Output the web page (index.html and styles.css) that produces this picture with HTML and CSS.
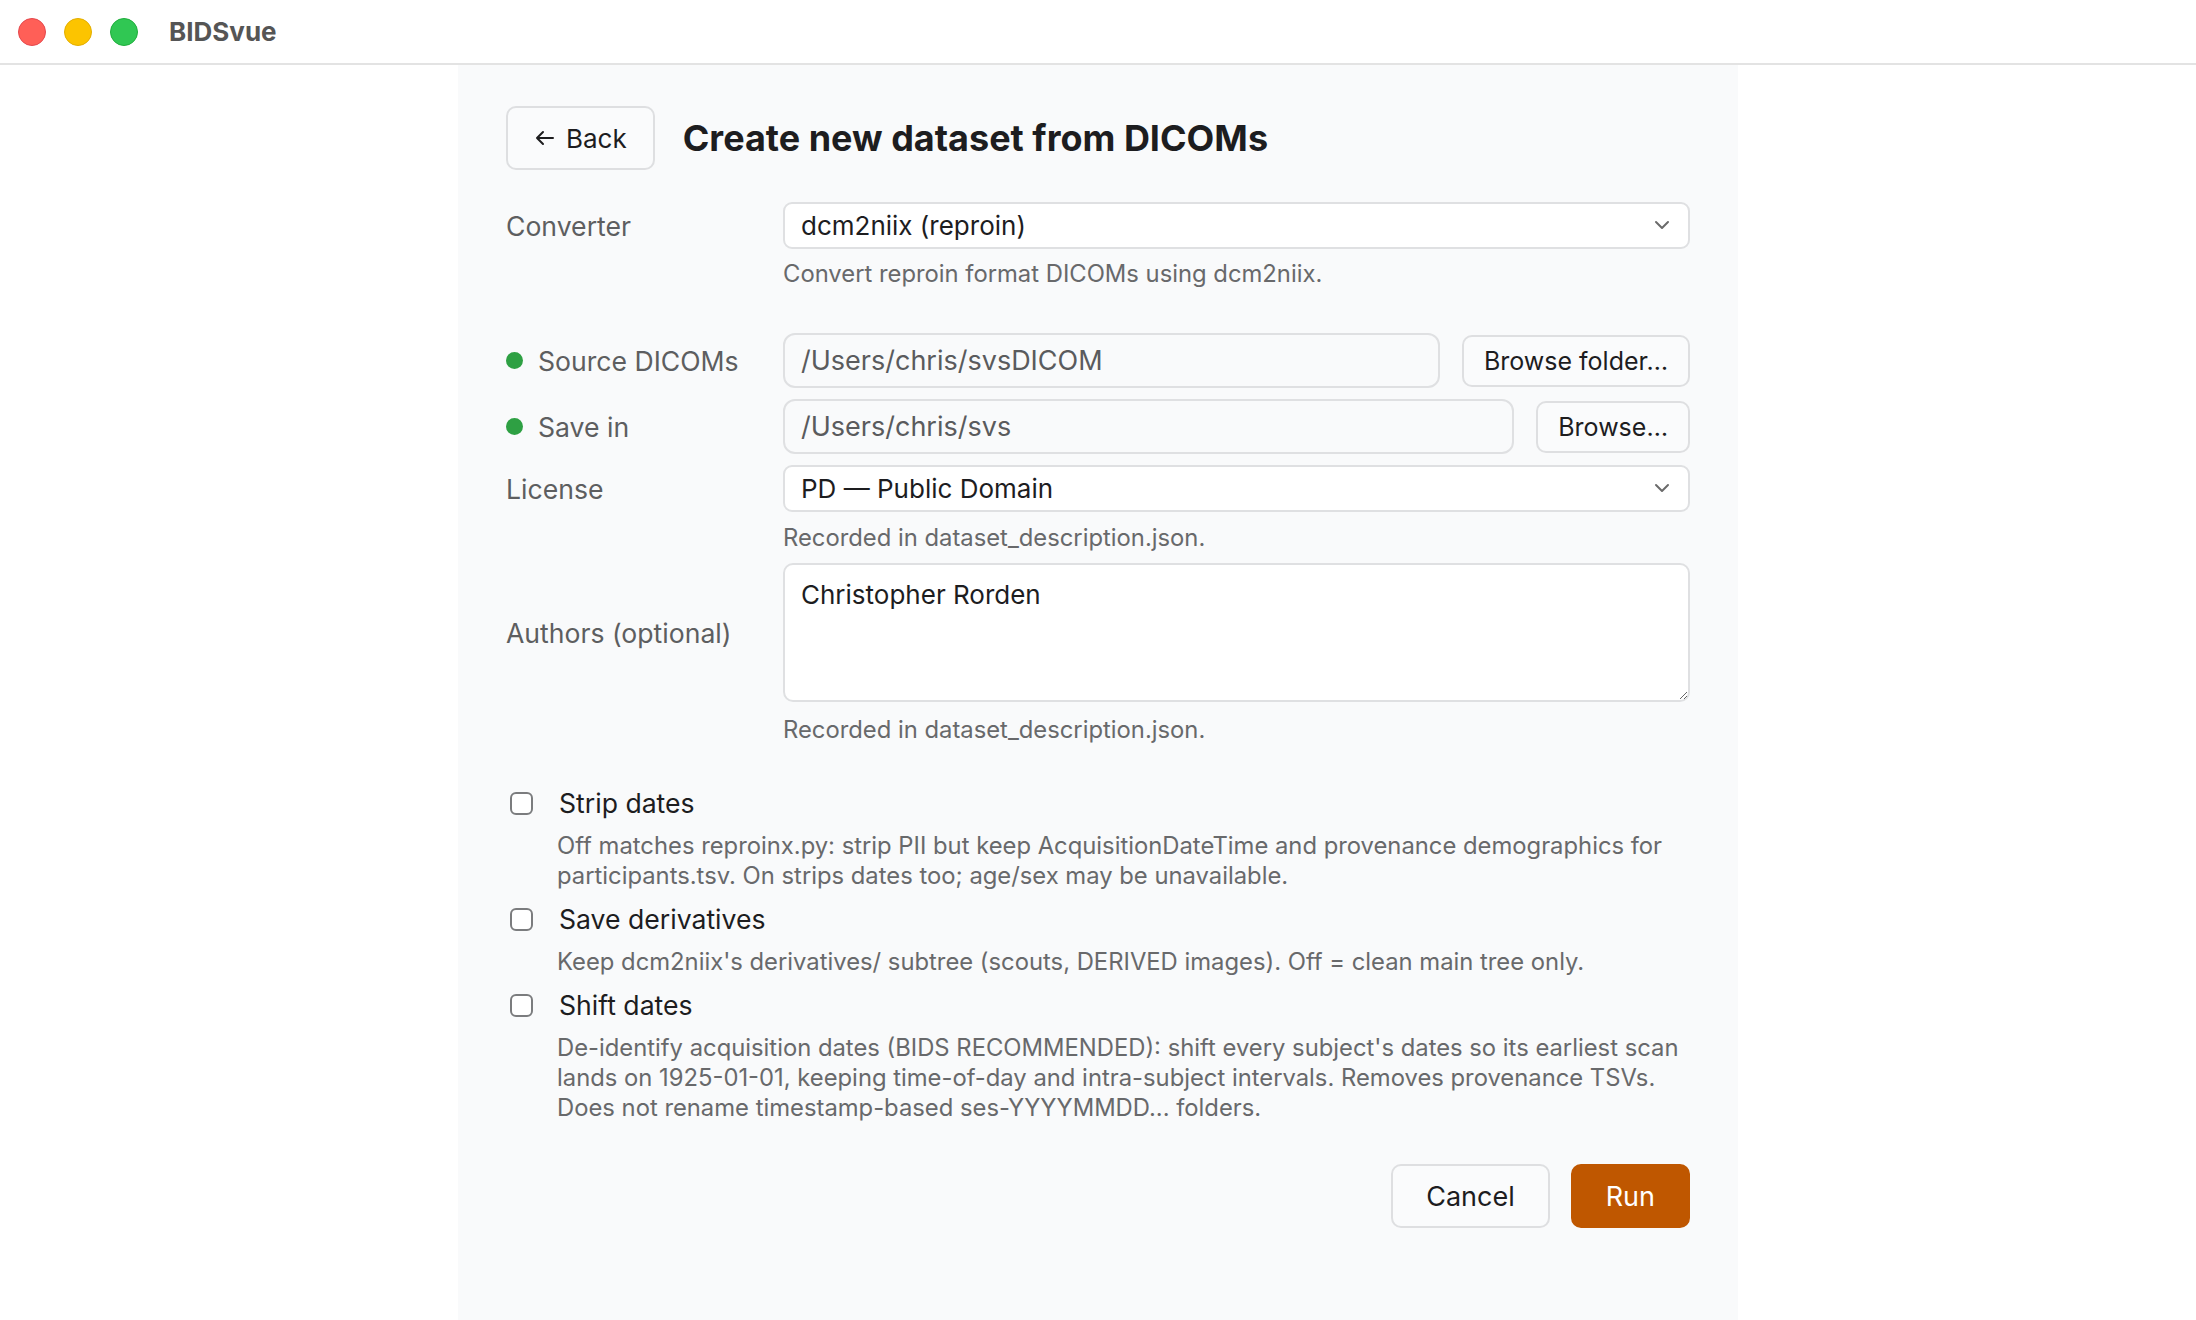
FILE: index.html
```html
<!DOCTYPE html>
<html lang="en">
<head>
    <meta charset="UTF-8">
    <meta name="viewport" content="width=device-width, initial-scale=1.0">
    <title>BIDSvue</title>
    <link rel="stylesheet" href="styles.css">
</head>
<body>
    <div class="titlebar">
        <div class="lights">
            <span class="light red"></span>
            <span class="light yellow"></span>
            <span class="light green"></span>
        </div>
        <div class="app-name">BIDSvue</div>
    </div>

    <main class="page">
        <section class="panel">
            <header class="panel-head">
                <button class="btn back-btn">
                    <svg width="20" height="16" viewBox="0 0 20 16" fill="none" stroke="currentColor" stroke-width="2" stroke-linecap="round" stroke-linejoin="round">
                        <path d="M18 8H2M8 2L2 8l6 6"/>
                    </svg>
                    Back
                </button>
                <h1>Create new dataset from DICOMs</h1>
            </header>

            <div class="form">
                <div class="field field-spaced">
                    <label class="field-label">Converter</label>
                    <div class="select-wrap">
                        <select class="select">
                            <option>dcm2niix (reproin)</option>
                        </select>
                        <svg class="chevron" width="16" height="10" viewBox="0 0 16 10" fill="none" stroke="currentColor" stroke-width="2" stroke-linecap="round" stroke-linejoin="round">
                            <path d="M2 2l6 6 6-6"/>
                        </svg>
                    </div>
                    <p class="hint">Convert reproin format DICOMs using dcm2niix.</p>
                </div>

                <div class="field">
                    <label class="field-label"><span class="dot"></span>Source DICOMs</label>
                    <div class="path-row">
                        <input class="path-input" type="text" value="/Users/chris/svsDICOM" readonly>
                        <button class="btn browse-btn">Browse folder…</button>
                    </div>
                </div>

                <div class="field">
                    <label class="field-label"><span class="dot"></span>Save in</label>
                    <div class="path-row">
                        <input class="path-input" type="text" value="/Users/chris/svs" readonly>
                        <button class="btn browse-btn">Browse…</button>
                    </div>
                </div>

                <div class="field">
                    <label class="field-label">License</label>
                    <div class="select-wrap">
                        <select class="select">
                            <option>PD — Public Domain</option>
                        </select>
                        <svg class="chevron" width="16" height="10" viewBox="0 0 16 10" fill="none" stroke="currentColor" stroke-width="2" stroke-linecap="round" stroke-linejoin="round">
                            <path d="M2 2l6 6 6-6"/>
                        </svg>
                    </div>
                    <p class="hint hint-mid">Recorded in dataset_description.json.</p>
                </div>

                <div class="field">
                    <label class="field-label">Authors (optional)</label>
                    <textarea class="authors">Christopher Rorden</textarea>
                    <p class="hint hint-low">Recorded in dataset_description.json.</p>
                </div>
            </div>

            <div class="options">
                <div class="option">
                    <input type="checkbox" class="check">
                    <span class="option-label">Strip dates</span>
                    <p class="option-desc">Off matches reproinx.py: strip PII but keep AcquisitionDateTime and provenance demographics for participants.tsv. On strips dates too; age/sex may be unavailable.</p>
                </div>
                <div class="option">
                    <input type="checkbox" class="check">
                    <span class="option-label">Save derivatives</span>
                    <p class="option-desc">Keep dcm2niix's derivatives/ subtree (scouts, DERIVED images). Off = clean main tree only.</p>
                </div>
                <div class="option">
                    <input type="checkbox" class="check">
                    <span class="option-label">Shift dates</span>
                    <p class="option-desc">De-identify acquisition dates (BIDS RECOMMENDED): shift every subject's dates so its earliest scan lands on 1925-01-01, keeping time-of-day and intra-subject intervals. Removes provenance TSVs. Does not rename timestamp-based ses-YYYYMMDD... folders.</p>
                </div>
            </div>

            <div class="actions">
                <button class="btn cancel-btn">Cancel</button>
                <button class="btn run-btn">Run</button>
            </div>
        </section>
    </main>
</body>
</html>
```

FILE: styles.css
```css
body {
    margin: 0;
    min-height: 100vh;
    display: flex;
    flex-direction: column;
    background-color: #ffffff;
    color: #1d1d1f;
    font-family: Inter, "Noto Sans", sans-serif;
}

/* window chrome */
.titlebar {
    height: 63px;
    border-bottom: 2px solid #e3e3e3;
    display: flex;
    align-items: center;
    padding-left: 18px;
    flex-shrink: 0;
}

.lights {
    display: flex;
    gap: 18px;
}

.light {
    width: 26px;
    height: 26px;
    border-radius: 50%;
    border: 1px solid;
}

.red {
    background-color: #ff5f57;
    border-color: #e5484d;
}

.yellow {
    background-color: #fcc400;
    border-color: #e3ae00;
}

.green {
    background-color: #30c753;
    border-color: #1fae3c;
}

.app-name {
    margin-left: 31px;
    font-size: 26px;
    font-weight: 700;
    color: #555555;
}

/* main panel */
.page {
    flex: 1;
    display: flex;
    justify-content: center;
}

.panel {
    width: 1280px;
    box-sizing: border-box;
    background-color: #f9fafb;
    padding: 41px 48px 60px;
}

.panel-head {
    display: flex;
    align-items: center;
    gap: 28px;
    margin-bottom: 32px;
}

h1 {
    margin: 0;
    font-size: 36px;
    font-weight: 700;
    color: #1d1d1f;
}

.btn {
    font-family: inherit;
    font-size: 26px;
    color: #1d1d1f;
    background-color: #fafbfc;
    border: 2px solid #dedfe1;
    border-radius: 10px;
    cursor: pointer;
}

.back-btn {
    height: 64px;
    padding: 0 26px 0 27px;
    display: flex;
    align-items: center;
    gap: 11px;
}

/* form rows */
.form {
    display: flex;
    flex-direction: column;
    gap: 11px;
}

.field {
    display: grid;
    grid-template-columns: 277px 1fr;
    align-items: center;
}

.field-spaced {
    margin-bottom: 33px;
}

.field-label {
    display: flex;
    align-items: center;
    font-size: 26.6px;
    color: #5d5e60;
}

.dot {
    width: 17px;
    height: 17px;
    border-radius: 50%;
    background-color: #2ea043;
    margin-right: 15px;
}

.hint {
    grid-column: 2;
    margin: 10px 0 0;
    font-size: 23.8px;
    line-height: 30px;
    color: #68696b;
}

.hint-mid {
    margin: 11px 0 -1px;
}

.hint-low {
    margin-top: 13px;
}

.select-wrap {
    position: relative;
}

.select {
    width: 100%;
    height: 47px;
    appearance: none;
    box-sizing: border-box;
    padding: 0 50px 0 16px;
    font-family: inherit;
    font-size: 26px;
    color: #1d1d1f;
    background-color: #ffffff;
    border: 2px solid #dfe0e2;
    border-radius: 9px;
}

.chevron {
    position: absolute;
    right: 20px;
    top: 18px;
    color: #6b6b6b;
    pointer-events: none;
}

.path-row {
    display: flex;
    align-items: center;
    gap: 22px;
}

.path-input {
    flex: 1;
    min-width: 0;
    height: 55px;
    box-sizing: border-box;
    padding: 0 16px;
    font-family: inherit;
    font-size: 27px;
    color: #5a5b5d;
    background-color: #f9fafb;
    border: 2px solid #dfe0e2;
    border-radius: 12px;
}

.browse-btn {
    height: 52px;
    padding: 0 20px;
    font-size: 25px;
}

.authors {
    height: 139px;
    box-sizing: border-box;
    padding: 12px 16px;
    font-family: inherit;
    font-size: 26px;
    line-height: 36px;
    color: #1d1d1f;
    background-color: #ffffff;
    border: 2px solid #dfe0e2;
    border-radius: 10px;
    resize: vertical;
}

/* checkbox options */
.options {
    margin-top: 40px;
    display: flex;
    flex-direction: column;
    gap: 10px;
}

.option {
    display: grid;
    grid-template-columns: 53px 1fr;
    align-items: center;
}

.check {
    appearance: none;
    width: 23px;
    height: 23px;
    margin: 0 0 0 4px;
    border: 2px solid #7b7c7e;
    border-radius: 6px;
    background-color: #ffffff;
}

.option-label {
    font-size: 26.6px;
    line-height: 36px;
    color: #1d1d1f;
}

.option-desc {
    grid-column: 2;
    margin: 10px 0 0 -2px;
    font-size: 23.8px;
    line-height: 30px;
    color: #68696b;
}

/* footer buttons */
.actions {
    margin-top: 41px;
    display: flex;
    justify-content: flex-end;
    gap: 21px;
}

.cancel-btn {
    height: 64px;
    padding: 0 33px;
    font-size: 27px;
}

.run-btn {
    height: 64px;
    padding: 0 33px;
    font-size: 27px;
    color: #ffffff;
    background-color: #bf5700;
    border-color: #bf5700;
}
```
